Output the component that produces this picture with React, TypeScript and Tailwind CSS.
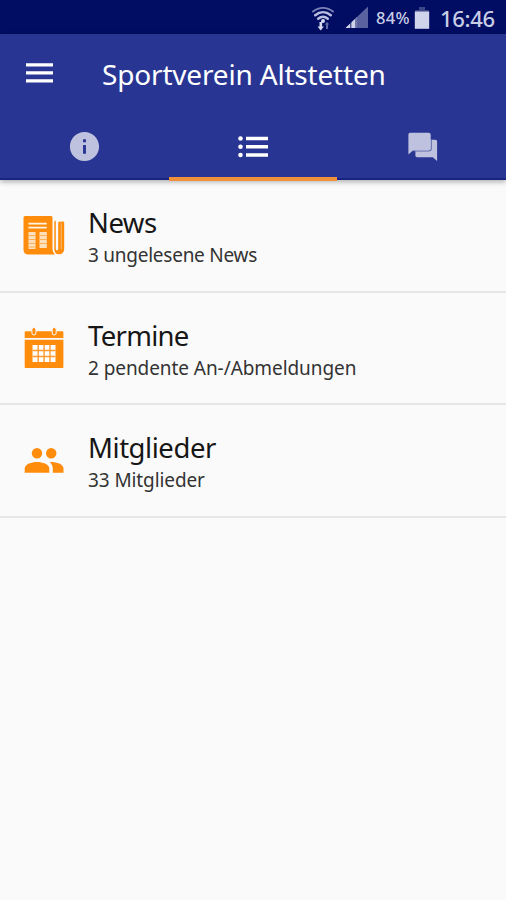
import React from "react";
import { MdInfo } from "react-icons/md";

type RowProps = {
    title: string;
    subtitle: string;
    titleClass: string;
    subtitleClass: string;
    icon: React.ReactNode;
};

const WifiIcon = () => (
    <svg width="26" height="26" viewBox="310 3 26 26" fill="none">
        <g stroke="#b9bedf" strokeLinecap="round">
            <path d="M313 9.6c6-5 14-5 20 0" strokeWidth="1.9" stroke="#7c83b8" />
            <path d="M315.2 13.2c4.8-4 10.8-4 15.6 0" strokeWidth="2.5" />
            <path d="M318.2 16.7c3-2.5 6.6-2.5 9.6 0" strokeWidth="2.5" />
        </g>
        <circle cx="323" cy="19" r="2" fill="#d5d8ee" />
        <path d="M319.5 20v4.5h-2l3.2 4 3.2-4h-1.8V20z" fill="#d5d8ee" />
        <path d="M326 27v-4.500h-1.3l2.3-2.5 2.3 2.5H328V27z" fill="#626aa8" />
    </svg>
);

const SignalIcon = () => (
    <svg width="24" height="24" viewBox="345 6 24 24">
        <path d="M345.5 28L368 6.5V28z" fill="#5a629f" />
        <path d="M345.5 28L357 17v11z" fill="#d0d4ea" />
        <path d="M350.8 21.5V28M356 17.5V28" stroke="#000d62" strokeWidth=".9" />
    </svg>
);

const BatteryIcon = () => (
    <svg width="16" height="24" viewBox="0 0 16 24">
        <path d="M5 1h6v3h3.8v2H1.2V4H5z" fill="#3c4588" />
        <path d="M.8 5.500h14.400v17.300H.8z" fill="#d0d4ea" />
    </svg>
);

const MenuIcon = () => (
    <svg width="27" height="20" viewBox="0 0 27 20" fill="#fff">
        <path d="M0 .3h27v3.2H0zM0 8.3h27v3.2H0zM0 16.3h27v3.2H0z" />
    </svg>
);

const ListIcon = () => (
    <svg width="30" height="24" viewBox="238 135 30 24" fill="#fff">
        <circle cx="240.5" cy="138.5" r="2.3" />
        <circle cx="240.5" cy="146.7" r="2.3" />
        <circle cx="240.5" cy="155" r="2.3" />
        <path d="M246 136.800h22v3.500h-22zM246 145h22v3.500h-22zM246 153.300h22v3.500h-22z" />
    </svg>
);

const ForumIcon = () => (
    <svg width="30" height="30" viewBox="408 131.5 30 30" fill="#bec2de">
        <path d="M417 139.200h18.500q1.600 0 1.600 1.600v19.8l-4.300-3.900h-15.700q-1.700 0-1.700-1.700v-14z" />
        <path
            d="M413.500 150.400h15.100q2.600 0 2.600-2.600V139"
            fill="none"
            stroke="#5d66aa"
            strokeWidth="1.2"
        />
        <path d="M410 132.300h18.800q1.900 0 1.900 1.900v13.700q0 2-2 2H413l-4.600 4V134q0-1.700 1.600-1.700z" />
    </svg>
);

const NewsIcon = () => (
    <svg width="42" height="42" viewBox="23 214.5 42 42" fill="#ff8c0a">
        <path d="M25 216.500h26q1.500 0 1.500 1.500v31.500q0 3.500 2.500 5.500H28.500q-5 0-5-5V218q0-1.500 1.500-1.500z" />
        <path d="M54.3 222.300q.2-1.100 1.500-1.100v28q0 1.800 1.200 1.800t1.200-1.800V223.500q0-1.600 1.500-1.600t1.500.8v0q0-1 1.400-1t1.600 1.600V249q0 5.800-5.300 5.800-4.600 0-4.600-5.300z" />
        <path d="M61.2 223.500v26" stroke="#fdca91" strokeWidth=".8" />
        <g fill="#fff3e4">
            <path d="M28.5 223.200h18.300v1.900H28.500zM28.500 227.200h18.300v1.900H28.500z" />
            <path d="M28.5 232.500h7v17h-7zM39.500 232.500h7.300v16h-7.300z" opacity=".82" />
        </g>
        <path
            d="M28.5 236h7m-7 4h7m-7 4h7m-7 3.500h7M39.500 236h7.300m-7.300 4h7.300m-7.300 4h7.300"
            stroke="#ffb05a"
            strokeWidth="1.1"
        />
    </svg>
);

const CalendarIcon = () => (
    <svg width="41" height="42" viewBox="24 326 41 42" fill="#ff8c0a">
        <path d="M24.7 331.500q0-1.200 1.200-1.200h36.300q1.200 0 1.200 1.200v5.500H24.700z" />
        <path d="M24.7 338.700h38.700v27.200q0 1.200-1.200 1.200H25.900q-1.200 0-1.200-1.200z" />
        <g stroke="#fbfbfb" fill="#ff8c0a" strokeWidth="1">
            <rect x="31.9" y="326.5" width="4" height="7.5" rx="2" />
            <rect x="52.2" y="326.5" width="4" height="7.5" rx="2" />
        </g>
        <path d="M32.5 344h23v17h-23z" fill="#fff" />
        <path
            d="M38.2 344v17M44.1 344v17M50 344v17M32.5 349.500h23M32.5 355.500h23"
            stroke="#ff9a2c"
            strokeWidth="1.4"
        />
    </svg>
);

const PeopleIcon = () => (
    <svg width="41" height="28" viewBox="24 446 41 28" fill="#ff8c0a">
        <circle cx="37" cy="453.2" r="5.2" />
        <circle cx="51.2" cy="453.2" r="5.2" />
        <path d="M24.7 472.700v-4.200c0-4.500 7-6.600 12.300-6.600s12.300 2.100 12.300 6.600v4.200z" />
        <path d="M49.5 462c1-.1 1.500-.1 1.700-.1 5.300 0 12.300 2.100 12.300 6.600v4.200H52.800v-4.200c0-2.900-1.300-5-3.300-6.500z" />
    </svg>
);

const Row: React.FC<RowProps> = ({ title, subtitle, titleClass, subtitleClass, icon }) => {
    return (
        <li className="h-[112.5px] flex items-center border-b-2 border-[#e6e6e6]">
            <div className="w-[88px] flex justify-center">{icon}</div>
            <div className="pt-[7px]">
                <h2 className={`text-[27.5px] leading-[34px] text-[#161616] ${titleClass}`}>
                    {title}
                </h2>
                <p className={`text-[19px] leading-[31px] text-[#333] ${subtitleClass}`}>
                    {subtitle}
                </p>
            </div>
        </li>
    );
};

const App = () => {
    return (
        <div className="h-screen overflow-hidden bg-[#fafafa] font-['Noto_Sans',sans-serif] whitespace-nowrap">
            <div className="h-[34px] bg-[#000d62] flex items-center justify-end pr-[11px] pt-[2px] text-[#c9cde6]">
                <WifiIcon />
                <div className="ml-[9px]">
                    <SignalIcon />
                </div>
                <span className="w-[35px] ml-[7px] text-[16.5px] font-medium tracking-[0.3px]">84%</span>
                <div className="ml-[3px]">
                    <BatteryIcon />
                </div>
                <span className="w-[55px] ml-[10px] text-[22px] font-medium tracking-[-0.3px]">16:46</span>
            </div>

            <header className="relative h-[146px] bg-[#283593] border-b-2 border-[#182482] shadow-[0_2px_5px_rgba(0,0,0,0.3)]">
                <div className="h-[78px] flex items-center pl-[26px]">
                    <MenuIcon />
                    <h1 className="ml-[49px] pt-[1px] text-[28px] text-white tracking-[-0.18px]">
                        Sportverein Altstetten
                    </h1>
                </div>
                <nav className="h-[68px] grid grid-cols-3">
                    <div className="flex justify-center pt-[17px]">
                        <MdInfo className="size-[35px] text-[#bec2de]" />
                    </div>
                    <div className="flex justify-center pt-[23px]">
                        <ListIcon />
                    </div>
                    <div className="flex justify-center pt-[19.5px] pl-[2px]">
                        <ForumIcon />
                    </div>
                </nav>
                <span className="absolute left-1/3 -bottom-[3px] h-1 w-1/3 bg-[#f0913a]"></span>
            </header>

            <ul>
                <Row
                    title="News"
                    subtitle="3 ungelesene News"
                    titleClass="tracking-[-0.5px]"
                    subtitleClass="tracking-[-0.25px]"
                    icon={<NewsIcon />}
                />
                <Row
                    title="Termine"
                    subtitle="2 pendente An-/Abmeldungen"
                    titleClass="tracking-[-0.7px]"
                    subtitleClass="tracking-[-0.07px]"
                    icon={<CalendarIcon />}
                />
                <Row
                    title="Mitglieder"
                    subtitle="33 Mitglieder"
                    titleClass="tracking-[-0.45px]"
                    subtitleClass="tracking-[-0.1px]"
                    icon={<PeopleIcon />}
                />
            </ul>
        </div>
    );
};

export default App;
